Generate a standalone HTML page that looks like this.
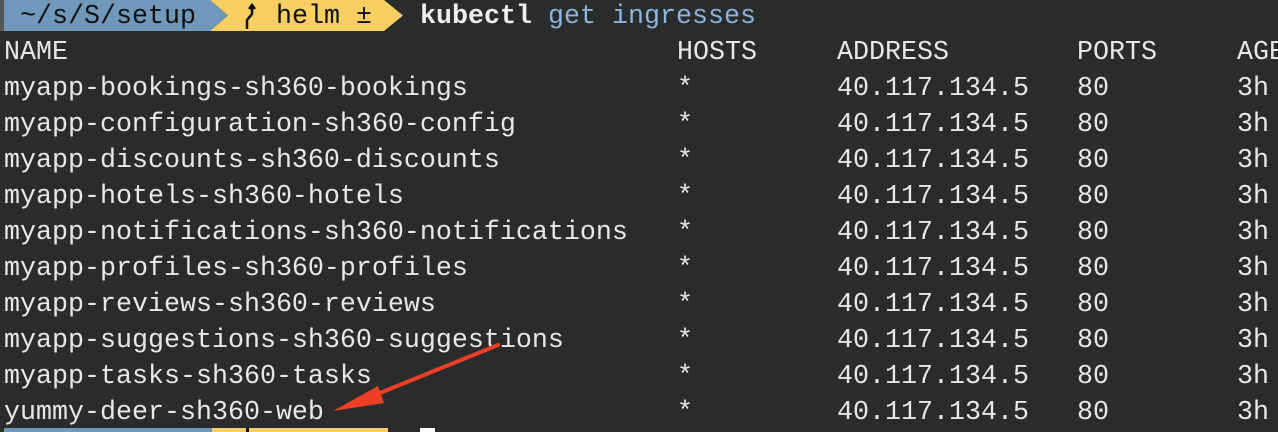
<!DOCTYPE html>
<html><head><style>
html,body{margin:0;padding:0;}
body{width:1278px;height:432px;background:#2a2b2b;overflow:hidden;position:relative;font-family:"Liberation Mono","DejaVu Sans Mono",monospace;font-size:26.67px;color:#e9e7e4;}
.t{position:absolute;white-space:pre;line-height:36px;}
.bar{position:absolute;}
</style></head><body>
<div class="bar" style="left:0;top:0;width:4px;height:31px;background:#555;"></div>
<div class="bar" style="left:4px;top:0;width:210px;height:31px;background:#6f98bb;"></div>
<svg style="position:absolute;left:210px;top:0" width="200" height="32"><polygon points="0,0 174,0 193,15.5 174,31 0,31 18,15.5 0,0" fill="#f8cf60"/><polygon points="0,0 18,15.5 0,31" fill="#6f98bb"/></svg>
<div class="t" style="left:20px;top:-1px;color:#111;">~/s/S/setup</div>
<div class="t" style="left:276px;top:-1px;color:#111;">helm ±</div>
<svg style="position:absolute;left:244px;top:3px" width="12" height="26"><path d="M3 26 V17 L8 11 V3 M5 6 L8 2 L11 6" stroke="#111" stroke-width="2.5" fill="none"/></svg>
<div class="t" style="left:420px;top:-1px;"><b style="color:#eee">kubectl</b> <span style="color:#8cb5de">get ingresses</span></div>
<div class="t" style="left:4px;top:35px;">NAME</div><div class="t" style="left:677px;top:35px;">HOSTS</div><div class="t" style="left:837px;top:35px;">ADDRESS</div><div class="t" style="left:1077px;top:35px;">PORTS</div><div class="t" style="left:1237px;top:35px;">AGE</div>
<div class="t" style="left:4px;top:71px;">myapp-bookings-sh360-bookings
myapp-configuration-sh360-config
myapp-discounts-sh360-discounts
myapp-hotels-sh360-hotels
myapp-notifications-sh360-notifications
myapp-profiles-sh360-profiles
myapp-reviews-sh360-reviews
myapp-suggestions-sh360-suggestions
myapp-tasks-sh360-tasks
yummy-deer-sh360-web</div>
<div class="t" style="left:677px;top:71px;">*
*
*
*
*
*
*
*
*
*</div>
<div class="t" style="left:837px;top:71px;">40.117.134.5
40.117.134.5
40.117.134.5
40.117.134.5
40.117.134.5
40.117.134.5
40.117.134.5
40.117.134.5
40.117.134.5
40.117.134.5</div>
<div class="t" style="left:1077px;top:71px;">80
80
80
80
80
80
80
80
80
80</div>
<div class="t" style="left:1237px;top:71px;">3h
3h
3h
3h
3h
3h
3h
3h
3h
3h</div>
<div class="bar" style="left:4px;top:428px;width:208px;height:4px;background:#6f98bb;"></div>
<div class="bar" style="left:212px;top:428px;width:176px;height:4px;background:#f8cf60;"></div>
<div class="bar" style="left:246px;top:428px;width:3px;height:4px;background:#111;"></div>
<div class="bar" style="left:420px;top:428px;width:15px;height:4px;background:#fff;"></div>
<svg style="position:absolute;left:0;top:0" width="1278" height="432"><line x1="498" y1="345" x2="370" y2="397" stroke="#ee3f26" stroke-width="4" stroke-linecap="round"/><polygon points="333,411 378,386 384,403" fill="#ee3f26"/></svg>
</body></html>
